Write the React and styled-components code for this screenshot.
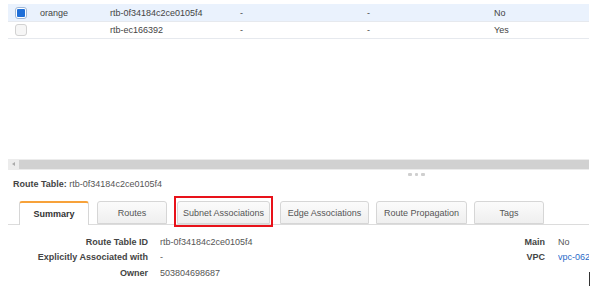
import React from "react";
import styled, { createGlobalStyle } from "styled-components";

const GlobalStyle = createGlobalStyle`
  html, body {
    margin: 0;
    padding: 0;
    background: #fff;
  }
  body {
    font-family: "Liberation Sans", Arial, sans-serif;
    font-size: 9px;
    color: #444;
  }
`;

const Page = styled.div`
  position: relative;
  width: 602px;
  height: 286px;
  overflow: hidden;
  padding: 4px 13px 0 8px;
  box-sizing: border-box;
`;

const Table = styled.div`
  height: 155px;
`;

const Row = styled.div`
  display: grid;
  grid-template-columns: 27px 70px 130px 127px 127px 1fr;
  align-items: center;
  height: ${(p) => p.$h}px;
  box-sizing: border-box;
  border-bottom: 1px solid #e6e9ee;
  background: ${(p) => (p.$selected ? "#eaf2fd" : "#fff")};
`;

const Cell = styled.div`
  padding-left: 5px;
  white-space: nowrap;
  color: #444;
`;

const CheckCell = styled.div`
  padding-left: 7px;
  display: flex;
  align-items: center;
`;

const Check = styled.div`
  width: 12px;
  height: 12px;
  box-sizing: border-box;
  border: 1px solid ${(p) => (p.$checked ? "#9fb7d6" : "#d2d2d2")};
  border-radius: 3px;
  background: ${(p) => (p.$checked ? "#fff" : "#f6f6f6")};
  display: flex;
  align-items: center;
  justify-content: center;
  &::after {
    content: "";
    display: ${(p) => (p.$checked ? "block" : "none")};
    width: 8px;
    height: 8px;
    border-radius: 1px;
    background: #1f6fd8;
  }
`;

const Scrollbar = styled.div`
  position: relative;
  height: 11px;
  background: #ececec;
  display: flex;
  align-items: center;
  padding-left: 11px;
  box-sizing: border-box;
`;

const ScrollArrow = styled.div`
  position: absolute;
  left: 4px;
  top: 3px;
  width: 0;
  height: 0;
  border-top: 2.5px solid transparent;
  border-bottom: 2.5px solid transparent;
  border-right: 3px solid #aaa;
`;

const Thumb = styled.div`
  flex: 1;
  height: 9px;
  background: #d1d1d1;
`;

const Handle = styled.div`
  display: flex;
  gap: 3px;
  justify-content: center;
  margin: 3px 0 0 400px;
  width: 17px;
`;

const Dot = styled.span`
  width: 4px;
  height: 3px;
  border-radius: 1px;
  background: #cfcfcf;
`;

const Title = styled.div`
  padding-left: 5px;
  margin-top: 2px;
  line-height: 12px;
  color: #555;
  b {
    color: #444;
  }
`;

const Tabs = styled.div`
  display: flex;
  align-items: flex-end;
  margin-top: 11px;
  padding-left: 11px;
  height: 23px;
  border-bottom: 1px solid #dcdcdc;
`;

const Tab = styled.div`
  position: relative;
  box-sizing: border-box;
  width: ${(p) => p.$w}px;
  height: ${(p) => (p.$active ? "24px" : "23px")};
  margin-bottom: ${(p) => (p.$active ? "-1px" : "0")};
  margin-right: ${(p) => p.$gap}px;
  display: flex;
  align-items: center;
  justify-content: center;
  white-space: nowrap;
  border: 1px solid #d6d6d6;
  border-bottom: ${(p) => (p.$active ? "none" : "1px solid #d6d6d6")};
  border-top: ${(p) => (p.$active ? "2px solid #f7a23a" : "1px solid #d6d6d6")};
  border-radius: 3px 3px 0 0;
  background: ${(p) => (p.$active ? "#fff" : "linear-gradient(#fbfbfb, #efefef)")};
  color: ${(p) => (p.$active ? "#333" : "#555")};
  font-weight: ${(p) => (p.$active ? 700 : 400)};
`;

const Highlight = styled.div`
  position: absolute;
  left: -4px;
  right: -4px;
  top: -6px;
  bottom: -4px;
  border: 2px solid #e8121a;
  pointer-events: none;
`;

const Details = styled.div`
  display: flex;
  margin-top: 9px;
  width: 581px;
  overflow: hidden;
`;

const DetailGrid = styled.div`
  display: grid;
  grid-template-columns: ${(p) => p.$cols};
  column-gap: ${(p) => p.$gap}px;
  grid-auto-rows: 15.5px;
  align-items: center;
  margin-left: ${(p) => (p.$right ? "auto" : "0")};
`;

const Label = styled.div`
  text-align: right;
  font-weight: 700;
  color: #444;
  white-space: nowrap;
`;

const Value = styled.div`
  color: ${(p) => (p.$link ? "#2a6ac8" : "#555")};
  white-space: nowrap;
  overflow: hidden;
`;

const Caret = styled.div`
  position: absolute;
  left: 589px;
  top: 272px;
  width: 1px;
  height: 14px;
  background: #333;
`;

const rows = [
  { checked: true, name: "orange", id: "rtb-0f34184c2ce0105f4", a: "-", b: "-", main: "No", h: 18 },
  { checked: false, name: "", id: "rtb-ec166392", a: "-", b: "-", main: "Yes", h: 17 },
];

const tabs = [
  { label: "Summary", active: true, w: 70, gap: 8 },
  { label: "Routes", w: 70, gap: 10 },
  { label: "Subnet Associations", marked: true, w: 93, gap: 10 },
  { label: "Edge Associations", w: 89, gap: 7 },
  { label: "Route Propagation", w: 91, gap: 7 },
  { label: "Tags", w: 70, gap: 0 },
];

export default function App() {
  return (
    <>
      <GlobalStyle />
      <Page>
        <Table>
          {rows.map((r) => (
            <Row key={r.id} $selected={r.checked} $h={r.h}>
              <CheckCell>
                <Check $checked={r.checked} />
              </CheckCell>
              <Cell>{r.name}</Cell>
              <Cell>{r.id}</Cell>
              <Cell>{r.a}</Cell>
              <Cell>{r.b}</Cell>
              <Cell>{r.main}</Cell>
            </Row>
          ))}
        </Table>
        <Scrollbar>
          <ScrollArrow />
          <Thumb />
        </Scrollbar>
        <Handle>
          <Dot />
          <Dot />
          <Dot />
        </Handle>
        <Title>
          <b>Route Table:</b> rtb-0f34184c2ce0105f4
        </Title>
        <Tabs>
          {tabs.map((t) => (
            <Tab key={t.label} $active={t.active} $w={t.w} $gap={t.gap}>
              {t.label}
              {t.marked && <Highlight />}
            </Tab>
          ))}
        </Tabs>
        <Details>
          <DetailGrid $cols="140px auto" $gap={12}>
            <Label>Route Table ID</Label>
            <Value>rtb-0f34184c2ce0105f4</Value>
            <Label>Explicitly Associated with</Label>
            <Value>-</Value>
            <Label>Owner</Label>
            <Value>503804698687</Value>
          </DetailGrid>
          <DetailGrid $cols="auto 31px" $gap={13} $right>
            <Label>Main</Label>
            <Value>No</Value>
            <Label>VPC</Label>
            <Value $link>vpc-062f2a7b</Value>
          </DetailGrid>
        </Details>
        <Caret />
      </Page>
    </>
  );
}
